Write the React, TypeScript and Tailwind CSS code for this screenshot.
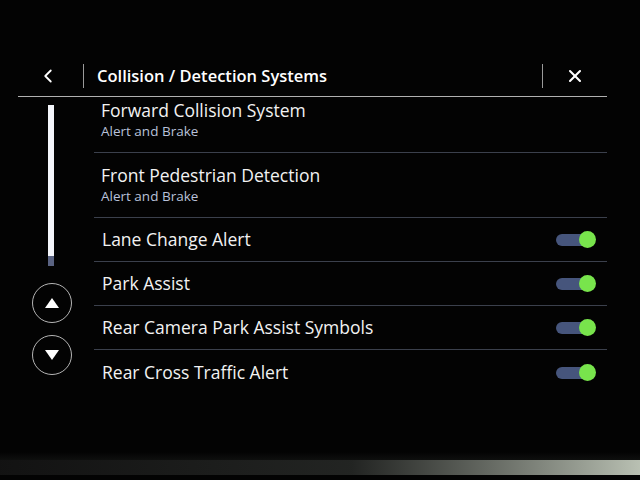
import { ChevronLeft, X } from 'lucide-react';

type Row = {
  title: string;
  subtitle?: string;
  toggle?: boolean;
};

const rows: Row[] = [
  { title: 'Forward Collision System', subtitle: 'Alert and Brake' },
  { title: 'Front Pedestrian Detection', subtitle: 'Alert and Brake' },
  { title: 'Lane Change Alert', toggle: true },
  { title: 'Park Assist', toggle: true },
  { title: 'Rear Camera Park Assist Symbols', toggle: true },
  { title: 'Rear Cross Traffic Alert', toggle: true },
];

function Toggle() {
  return (
    <div className="relative mr-[11px] h-[17px] w-[40px]">
      <div className="absolute left-0 top-[3px] h-[12px] w-[37px] rounded-full bg-[#46557c]" />
      <div className="absolute right-0 top-0 h-[17px] w-[17px] rounded-full bg-[#78e44c]" />
    </div>
  );
}

function ListRow({ row, first, last }: { row: Row; first: boolean; last: boolean }) {
  if (row.subtitle) {
    return (
      <div
        className={`flex flex-col border-b border-[#3b404c] pl-[7px] pb-[11px] ${
          first ? 'pt-[2px]' : 'pt-[11px]'
        }`}
      >
        <span className="text-[17.5px] leading-[23px] text-[#f2f2f2]">{row.title}</span>
        <span className="text-[13.5px] leading-[19px] text-[#b9c1da]">{row.subtitle}</span>
      </div>
    );
  }
  return (
    <div
      className={`flex h-[44px] items-center justify-between pl-[8px] ${
        last ? '' : 'border-b border-[#3b404c]'
      }`}
    >
      <span className="text-[17.5px] leading-[23px] text-[#f2f2f2]">{row.title}</span>
      {row.toggle && <Toggle />}
    </div>
  );
}

function ArrowButton({ up }: { up: boolean }) {
  return (
    <div className="ml-[14px] flex h-[40px] w-[40px] items-center justify-center rounded-full border border-[#b5b5b5]">
      <svg width="16" height="12" viewBox="0 0 16 12">
        {up ? (
          <polygon points="8,1 15,11 1,11" fill="#ffffff" />
        ) : (
          <polygon points="1,1 15,1 8,11" fill="#ffffff" />
        )}
      </svg>
    </div>
  );
}

export default function App() {
  return (
    <div
      className="relative flex h-[480px] w-[640px] flex-col overflow-hidden bg-[#030303]"
      style={{ fontFamily: '"Open Sans", "Noto Sans", sans-serif' }}
    >
      {/* header */}
      <div className="ml-[18px] mt-[64px] flex h-[33px] w-[589px] items-start border-b border-[#b0b0b0]">
        <div className="flex h-[24px] w-[60px] items-center justify-center">
          <ChevronLeft className="h-[22px] w-[22px] text-white" strokeWidth={2} />
        </div>
        <div className="ml-[5px] h-[24px] w-[1px] bg-[#9a9a9a]" />
        <span className="ml-[13px] text-[16.5px] font-semibold leading-[24px] text-white">
          Collision / Detection Systems
        </span>
        <div className="ml-auto h-[24px] w-[1px] bg-[#9a9a9a]" />
        <div className="flex h-[24px] w-[64px] items-center justify-center">
          <X className="h-[20px] w-[20px] text-white" strokeWidth={2.5} />
        </div>
      </div>

      {/* body */}
      <div className="ml-[18px] flex">
        <div className="flex w-[76px] flex-col">
          <div className="ml-[30px] mt-[8px] flex h-[161px] w-[6px] flex-col bg-[#5a6382]">
            <div className="h-[151px] w-full bg-[#f4f6fb]" />
          </div>
          <div className="mt-[17px] flex flex-col gap-[12px]">
            <ArrowButton up />
            <ArrowButton up={false} />
          </div>
        </div>
        <div className="flex w-[513px] flex-col">
          {rows.map((r, i) => (
            <ListRow key={r.title} row={r} first={i === 0} last={i === rows.length - 1} />
          ))}
        </div>
      </div>

      {/* bezel reflection at the bottom */}
      <div className="absolute bottom-[5px] left-0 h-[15px] w-[640px] bg-gradient-to-r from-[#141414] via-[#262826] via-55% to-[#cdd5c6] opacity-90" />
      <div className="absolute bottom-[20px] left-0 h-[8px] w-[640px] bg-gradient-to-b from-transparent to-[#0e0f0e]" />
    </div>
  );
}
